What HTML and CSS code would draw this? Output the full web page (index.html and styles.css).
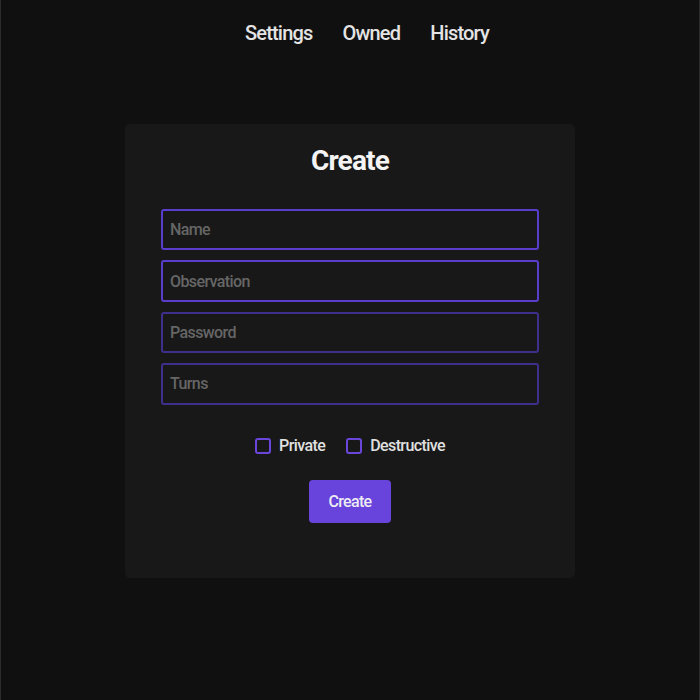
FILE: index.html
```html
<!DOCTYPE html>
<html lang="en">
<head>
<meta charset="utf-8">
<title>Create</title>
<link rel="stylesheet" href="styles.css">
</head>
<body>
<div class="page">
  <nav class="nav">
    <a class="nav-link" href="#">Settings</a>
    <a class="nav-link" href="#">Owned</a>
    <a class="nav-link" href="#">History</a>
  </nav>
  <main class="main">
    <form class="card">
      <h1 class="title">Create</h1>
      <div class="fields">
        <input class="field field-active" type="text" placeholder="Name">
        <input class="field field-active" type="text" placeholder="Observation">
        <input class="field" type="password" placeholder="Password">
        <input class="field" type="text" placeholder="Turns">
      </div>
      <div class="checks">
        <label class="check"><span class="box"></span>Private</label>
        <label class="check"><span class="box"></span>Destructive</label>
      </div>
      <button class="btn" type="button">Create</button>
    </form>
  </main>
</div>
</body>
</html>
```
FILE: styles.css
```css
* { box-sizing: border-box; }
html, body { margin: 0; padding: 0; background: #101010; }
body { font-family: Roboto, "Noto Sans", sans-serif; color: #e6e6e6; }
.page {
  min-height: 700px;
  border-left: 1px solid #2c2c2c;
  border-right: 1px solid #2c2c2c;
  display: flex;
  flex-direction: column;
  align-items: center;
}
.nav {
  display: flex;
  gap: 30px;
  padding: 20px 0 0 34px;
  height: 124px;
}
.nav-link {
  color: #e4e4e4;
  text-decoration: none;
  font-size: 20px;
  font-weight: 500;
  line-height: 26px;
  letter-spacing: -0.8px;
}
.main { display: flex; justify-content: center; }
.card {
  width: 450px;
  height: 454px;
  background: #181818;
  border-radius: 5px;
  padding: 20px 36px 0;
  display: flex;
  flex-direction: column;
  align-items: center;
}
.title {
  margin: 0;
  font-size: 28px;
  font-weight: 700;
  line-height: 34px;
  color: #f4f4f4;
  letter-spacing: -0.8px;
}
.fields {
  width: 100%;
  margin-top: 31px;
  display: flex;
  flex-direction: column;
  gap: 10px;
}
.field {
  width: 100%;
  height: 41.4px;
  background: #181818;
  border: 2px solid #3f2f8c;
  border-radius: 3px;
  padding: 0 7px;
  font-family: inherit;
  font-size: 16px;
  font-weight: 500;
  letter-spacing: -0.6px;
  color: #ddd;
  outline: none;
}
.field-active { border-color: #5a3dcc; }
.field::placeholder { color: #666; }
.checks {
  display: flex;
  gap: 21px;
  margin-top: 32px;
}
.check {
  display: flex;
  align-items: center;
  gap: 8px;
  font-size: 16px;
  font-weight: 500;
  letter-spacing: -0.6px;
  color: #e0e0e0;
  line-height: 18px;
}
.box {
  width: 16px;
  height: 16px;
  border: 2px solid #6a46dc;
  border-radius: 3px;
}
.btn {
  margin-top: 25px;
  width: 82px;
  height: 43px;
  background: #6844dc;
  border: none;
  border-radius: 4px;
  color: #ececf2;
  font-family: inherit;
  font-size: 16px;
  font-weight: 500;
  letter-spacing: -0.7px;
}
```
